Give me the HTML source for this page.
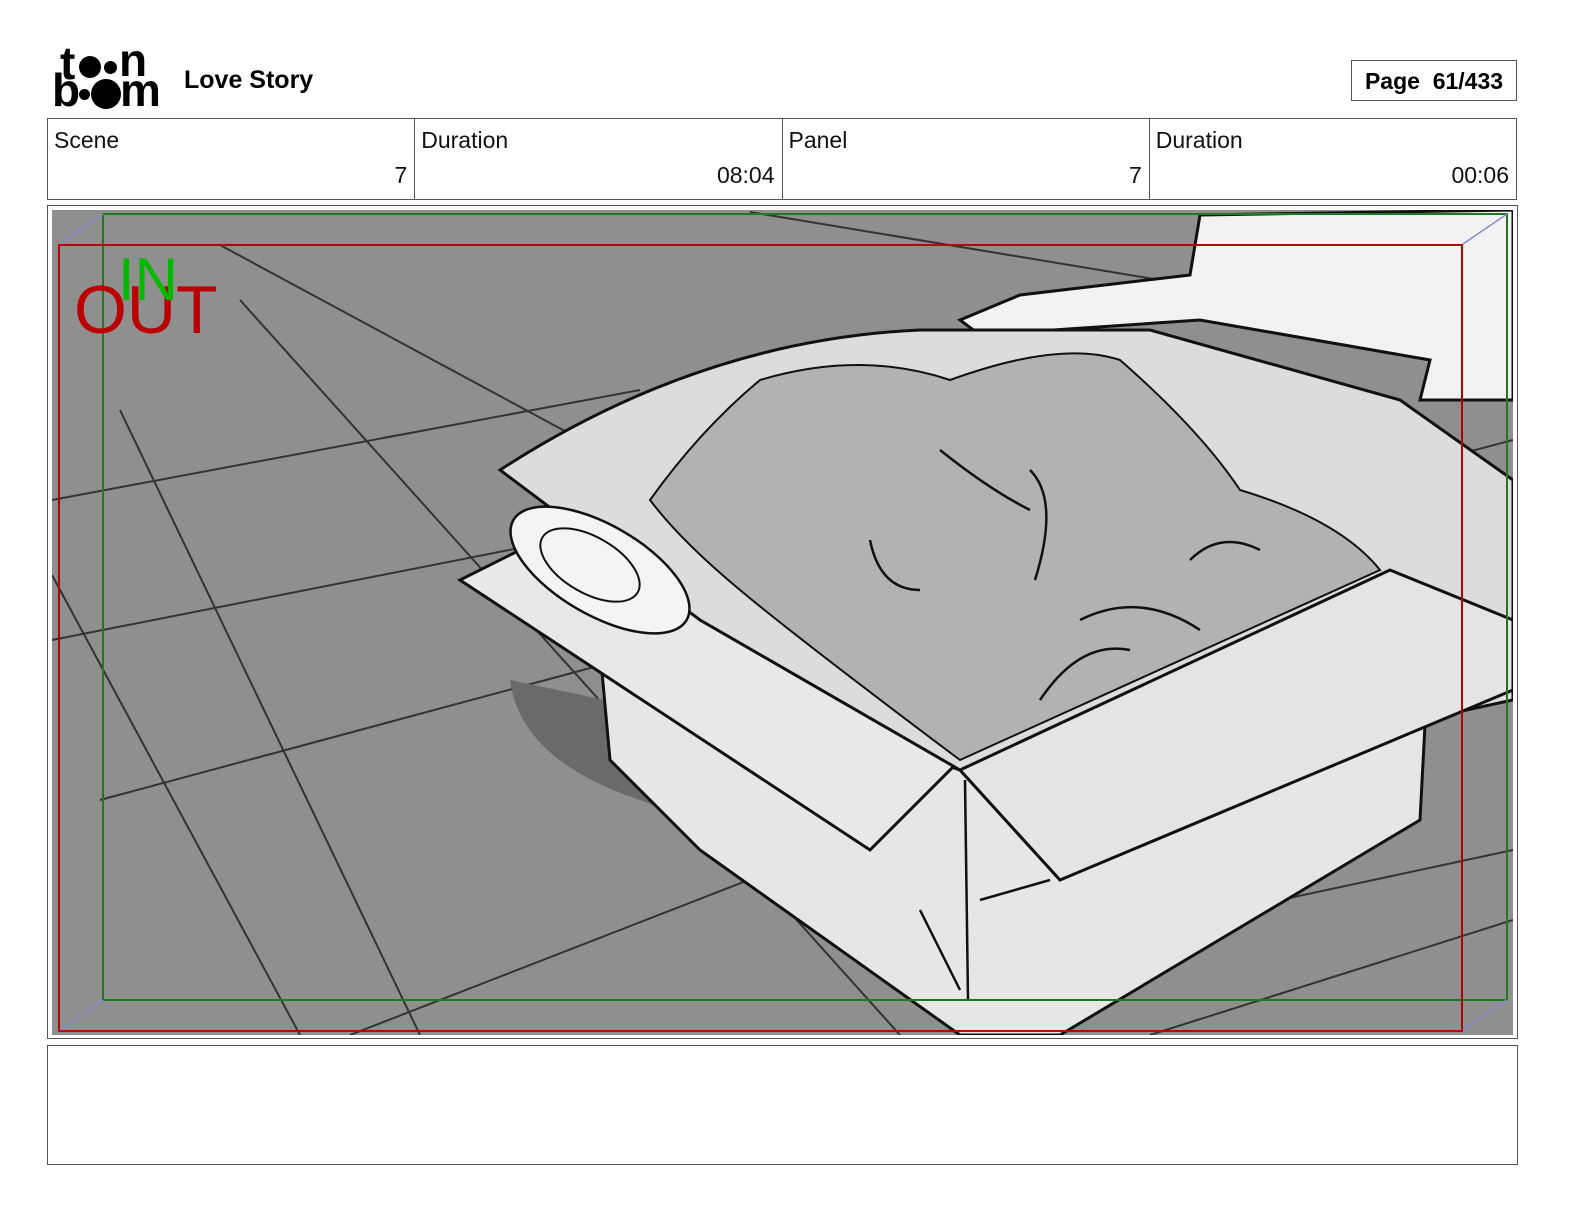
<!DOCTYPE html>
<html><head><meta charset="utf-8"><style>
body{margin:0;background:#fff;width:1584px;height:1224px;position:relative;font-family:"Liberation Sans",sans-serif;overflow:hidden}
.abs{position:absolute}
.hdr{left:47px;top:118px;width:1470px;height:82px;border:1px solid #555;box-sizing:border-box;display:flex}
.cell{flex:1;border-right:1px solid #555;position:relative;font-size:23px;color:#111}
.cell:last-child{border-right:none}
.cell .l{position:absolute;left:6px;top:8px}
.cell .v{position:absolute;right:7px;top:43px}
.lg{position:absolute;font-weight:bold;font-size:46px;line-height:46px}
.d{position:absolute;border-radius:50%;background:#000}
</style></head><body>
<div class="abs" style="left:52px;top:50px;width:112px;height:60px">
<span class="lg" style="left:8px;top:-10px">t</span>
<span class="d" style="left:27px;top:6px;width:22px;height:22px"></span>
<span class="d" style="left:52px;top:11px;width:13px;height:13px"></span>
<span class="lg" style="left:67px;top:-13px">n</span>
<span class="lg" style="left:0px;top:17px">b</span>
<span class="d" style="left:27px;top:39px;width:11px;height:11px"></span>
<span class="d" style="left:39px;top:29px;width:30px;height:30px"></span>
<span class="lg" style="left:68px;top:17px;letter-spacing:-2px">m</span>
</div>
<div class="abs" style="left:184px;top:66px;font-size:25px;font-weight:bold">Love Story</div>
<div class="abs" style="left:1351px;top:60px;width:166px;height:41px;border:1px solid #555;box-sizing:border-box;font-size:23px;font-weight:bold;text-align:center;line-height:40px">Page&nbsp; 61/433</div>
<div class="abs hdr">
<div class="cell"><span class="l">Scene</span><span class="v">7</span></div>
<div class="cell"><span class="l">Duration</span><span class="v">08:04</span></div>
<div class="cell"><span class="l">Panel</span><span class="v">7</span></div>
<div class="cell"><span class="l">Duration</span><span class="v">00:06</span></div>
</div>
<div class="abs" style="left:47px;top:205px;width:1471px;height:834px;border:1px solid #555;box-sizing:border-box"></div>
<svg class="abs" style="left:0;top:0" width="1584" height="1224">
<defs><clipPath id="c"><rect x="52" y="210" width="1461" height="825"/></clipPath></defs>
<g clip-path="url(#c)">
<rect x="52" y="210" width="1461" height="825" fill="#8f8f8f"/>
<g stroke="#333" stroke-width="2" fill="none">
<path d="M220 245 L600 450"/><path d="M120 410 L420 1035"/><path d="M52 575 L300 1035"/><path d="M240 300 L900 1035"/>
<path d="M52 500 L640 390"/><path d="M52 640 L560 540"/><path d="M100 800 L620 660"/><path d="M350 1035 L800 860"/>
<path d="M750 212 L1220 290"/><path d="M1280 900 L1513 850"/><path d="M1150 1035 L1513 920"/><path d="M1400 470 L1513 440"/>
</g>
<path d="M510 680 Q520 760 640 800 L900 900 L700 720 Z" fill="#6a6a6a"/>
<path d="M1200 215 L1513 210 L1513 400 L1420 400 L1430 360 L1200 320 L980 335 L960 320 L1020 295 L1190 275 Z" fill="#f2f2f2" stroke="#111" stroke-width="3"/>
<path d="M600 650 L610 760 L700 850 L960 1035 L1060 1035 L1420 820 L1425 725 L1060 870 L960 770 Z" fill="#e6e6e6" stroke="#111" stroke-width="3"/>
<path d="M460 580 L600 510 L960 760 L870 850 Z" fill="#e8e8e8" stroke="#111" stroke-width="3"/>
<path d="M500 470 Q700 340 920 330 L1150 330 L1400 400 L1513 480 L1513 700 L1420 720 L1060 880 L960 770 L700 620 Z" fill="#dcdcdc" stroke="#111" stroke-width="3"/>
<path d="M960 770 L1390 570 L1513 620 L1513 690 L1060 880 Z" fill="#e4e4e4" stroke="#111" stroke-width="3"/>
<path d="M650 500 Q700 430 760 380 Q860 350 950 380 Q1060 340 1120 360 Q1200 430 1240 490 Q1340 520 1380 570 L960 760 Q800 640 740 590 Q680 540 650 500 Z" fill="#b2b2b2" stroke="#111" stroke-width="2"/>
<g stroke="#111" stroke-width="2.5" fill="none">
<path d="M870 540 Q880 590 920 590"/><path d="M1030 470 Q1060 500 1035 580"/><path d="M1080 620 Q1140 590 1200 630"/><path d="M1190 560 Q1220 530 1260 550"/><path d="M940 450 Q990 490 1030 510"/><path d="M1040 700 Q1080 640 1130 650"/>
<path d="M965 780 L968 1000"/><path d="M920 910 L960 990"/><path d="M980 900 L1050 880"/>
</g>
<ellipse cx="600" cy="570" rx="100" ry="45" transform="rotate(30 600 570)" fill="#f4f4f4" stroke="#111" stroke-width="2.5"/>
<ellipse cx="590" cy="565" rx="55" ry="28" transform="rotate(30 590 565)" fill="none" stroke="#111" stroke-width="2"/>
</g>
<rect x="103" y="214" width="1404" height="786" fill="none" stroke="#1f7a1f" stroke-width="2"/>
<rect x="59" y="245" width="1403" height="786" fill="none" stroke="#b00" stroke-width="2"/>
<g stroke="#8a8ad0" stroke-width="1.5"><path d="M103 214 L60 244"/><path d="M1507 214 L1463 244"/><path d="M103 1000 L60 1030"/><path d="M1507 1000 L1463 1030"/></g>
<text x="74" y="333" font-family="Liberation Sans" font-size="68" fill="#b00">OUT</text>
<text x="118" y="300" font-family="Liberation Sans" font-size="60" fill="#0b0">IN</text>
</svg>
<div class="abs" style="left:47px;top:1045px;width:1471px;height:120px;border:1px solid #555;box-sizing:border-box"></div>
</body></html>
